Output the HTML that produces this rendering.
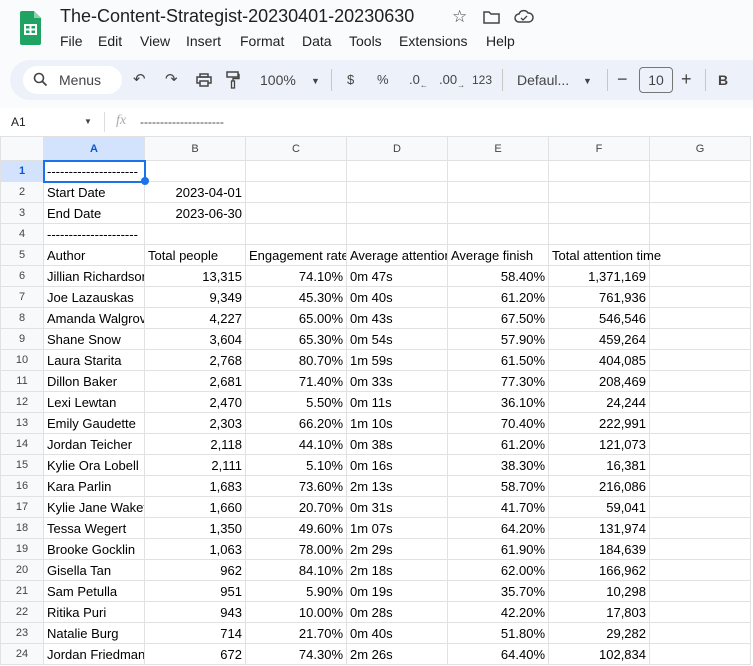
<!DOCTYPE html>
<html><head><meta charset="utf-8"><style>
body{margin:0;width:753px;height:666px;overflow:hidden;background:#f9fbfd;font-family:"Liberation Sans",Arial,sans-serif;position:relative;color:#1f1f1f}
.a{position:absolute;white-space:nowrap}
#title{left:60px;top:6px;font-size:18px;color:#1f1f1f}
#tb{left:10px;top:60px;width:760px;height:40px;background:#edf2fa;border-radius:20px}
#search{left:23px;top:66px;width:99px;height:28px;background:#fff;border-radius:14px}
.t{font-size:13px;color:#444;top:72px}
#fb{left:0;top:108px;width:753px;height:28px;background:#fff;border-bottom:1px solid #e1e1e1}
#bg{left:0;top:136px;width:753px;height:530px;background:#fff}
table{position:absolute;left:0;top:136px;width:750px;border-collapse:collapse;table-layout:fixed;background:#fff;font-size:13px}
td{border:1px solid #e1e1e1;height:21px;padding:0 3px;overflow:hidden;white-space:nowrap;color:#000;box-sizing:border-box}
tr:first-child td{height:24px;text-align:center;font-size:11px;color:#444;background:#f8f9fa}
td:first-child{text-align:center;font-size:11px;color:#444;background:#f8f9fa;padding:0}
.r{text-align:right}
</style></head><body>
<svg class="a" style="left:20px;top:11px" width="21" height="34" viewBox="0 0 21 34"><path d="M2 0h12l7 7v25a2 2 0 0 1-2 2H2a2 2 0 0 1-2-2V2a2 2 0 0 1 2-2z" fill="#1ea362"/><path d="M14 0v7h7z" fill="#8ed1a9"/><rect x="5" y="14" width="11" height="9" fill="none" stroke="#fff" stroke-width="2"/><path d="M5 18.5h11M10.5 14v9" stroke="#fff" stroke-width="2"/></svg>
<div class="a" id="title">The-Content-Strategist-20230401-20230630</div>
<div class="a" style="left:452px;top:7px;font-size:17px;color:#444">☆</div>
<svg class="a" style="left:483px;top:10px" width="17" height="14"><path d="M1 2h5l2 2h8v9H1z" fill="none" stroke="#444" stroke-width="1.5"/></svg>
<svg class="a" style="left:514px;top:9px" width="20" height="15"><path d="M5 13a4 4 0 0 1 0-8 5 5 0 0 1 9-1 4 4 0 0 1 1 9z" fill="none" stroke="#444" stroke-width="1.5"/><path d="M7 9l2 2 4-4" fill="none" stroke="#444" stroke-width="1.3"/></svg>
<div class="a" style="left:60px;top:33px;font-size:14px">File</div><div class="a" style="left:98px;top:33px;font-size:14px">Edit</div><div class="a" style="left:140px;top:33px;font-size:14px">View</div><div class="a" style="left:186px;top:33px;font-size:14px">Insert</div><div class="a" style="left:240px;top:33px;font-size:14px">Format</div><div class="a" style="left:302px;top:33px;font-size:14px">Data</div><div class="a" style="left:349px;top:33px;font-size:14px">Tools</div><div class="a" style="left:399px;top:33px;font-size:14px">Extensions</div><div class="a" style="left:486px;top:33px;font-size:14px">Help</div>
<div class="a" id="tb"></div>
<div class="a" id="search"></div>
<svg class="a" style="left:33px;top:72px" width="15" height="15"><circle cx="6" cy="6" r="4.5" fill="none" stroke="#444" stroke-width="1.6"/><path d="M9.5 9.5l4 4" stroke="#444" stroke-width="1.8"/></svg>
<div class="a t" style="left:59px;top:72px;font-size:14px">Menus</div>
<div class="a t" style="left:133px;font-size:15px;top:70px">↶</div><div class="a t" style="left:165px;font-size:15px;top:70px">↷</div>
<svg class="a" style="left:196px;top:73px" width="16" height="14"><rect x="4" y="1" width="8" height="3" fill="none" stroke="#444" stroke-width="1.5"/><rect x="1" y="4" width="14" height="6" fill="none" stroke="#444" stroke-width="1.5"/><rect x="4" y="8" width="8" height="5" fill="#edf2fa" stroke="#444" stroke-width="1.5"/></svg>
<svg class="a" style="left:226px;top:71px" width="14" height="18"><rect x="1" y="1" width="11" height="5" fill="none" stroke="#444" stroke-width="1.5"/><path d="M12 3.5h1v4H7v3" fill="none" stroke="#444" stroke-width="1.4"/><rect x="5.5" y="10" width="3" height="7" fill="none" stroke="#444" stroke-width="1.3"/></svg>
<div class="a t" style="left:260px;font-size:14px;top:72px">100%</div><div class="a t" style="left:311px;font-size:9px;top:76px">▼</div>
<div class="a" style="left:331px;top:69px;width:1px;height:22px;background:#c7c7c7"></div>
<div class="a t" style="left:347px">$</div><div class="a t" style="left:377px">%</div><div class="a t" style="left:409px">.0<sub style="font-size:8px">←</sub></div><div class="a t" style="left:439px">.00<sub style="font-size:8px">→</sub></div><div class="a t" style="left:472px;font-size:12px;top:73px">123</div>
<div class="a" style="left:502px;top:69px;width:1px;height:22px;background:#c7c7c7"></div>
<div class="a t" style="left:517px;font-size:14px">Defaul...</div><div class="a t" style="left:583px;font-size:9px;top:76px">▼</div>
<div class="a" style="left:607px;top:69px;width:1px;height:22px;background:#c7c7c7"></div>
<div class="a t" style="left:617px;font-size:18px;top:69px">−</div>
<div class="a" style="left:639px;top:67px;width:32px;height:24px;border:1px solid #747775;border-radius:4px;text-align:center;line-height:24px;font-size:14px;color:#444">10</div>
<div class="a t" style="left:681px;font-size:18px;top:69px">+</div>
<div class="a" style="left:705px;top:69px;width:1px;height:22px;background:#c7c7c7"></div>
<div class="a t" style="left:718px;font-size:14px;font-weight:bold;top:72px">B</div>
<div class="a" id="fb"></div>
<div class="a" id="bg"></div>
<div class="a" style="left:11px;top:115px;font-size:12px">A1</div>
<div class="a" style="left:84px;top:117px;font-size:8px;color:#444">▼</div>
<div class="a" style="left:104px;top:112px;width:1px;height:20px;background:#ddd"></div>
<div class="a" style="left:116px;top:113px;font-size:14px;color:#aaa;font-style:italic;font-family:'Liberation Serif',serif">fx</div>
<div class="a" style="left:140px;top:115px;font-size:12px;color:#444">---------------------</div>
<table>
<colgroup><col style="width:43px"><col style="width:101px"><col style="width:101px"><col style="width:101px"><col style="width:101px"><col style="width:101px"><col style="width:101px"><col style="width:101px"></colgroup>
<tr><td></td><td style="background:#d3e3fd;color:#0b57d0;font-weight:bold">A</td><td>B</td><td>C</td><td>D</td><td>E</td><td>F</td><td>G</td></tr>
<tr><td style="background:#d3e3fd;color:#0b57d0;font-weight:bold">1</td><td style="outline:2px solid #1a73e8;outline-offset:-1px">---------------------</td><td></td><td></td><td></td><td></td><td></td><td></td></tr>
<tr><td>2</td><td>Start Date</td><td class="r">2023-04-01</td><td></td><td></td><td></td><td></td><td></td></tr>
<tr><td>3</td><td>End Date</td><td class="r">2023-06-30</td><td></td><td></td><td></td><td></td><td></td></tr>
<tr><td>4</td><td>---------------------</td><td></td><td></td><td></td><td></td><td></td><td></td></tr>
<tr><td>5</td><td>Author</td><td>Total people</td><td>Engagement rate</td><td>Average attention</td><td>Average finish</td><td style="overflow:visible">Total attention time</td><td></td></tr>
<tr><td>6</td><td>Jillian Richardson</td><td class="r">13,315</td><td class="r">74.10%</td><td>0m 47s</td><td class="r">58.40%</td><td class="r">1,371,169</td><td></td></tr>
<tr><td>7</td><td>Joe Lazauskas</td><td class="r">9,349</td><td class="r">45.30%</td><td>0m 40s</td><td class="r">61.20%</td><td class="r">761,936</td><td></td></tr>
<tr><td>8</td><td>Amanda Walgrove</td><td class="r">4,227</td><td class="r">65.00%</td><td>0m 43s</td><td class="r">67.50%</td><td class="r">546,546</td><td></td></tr>
<tr><td>9</td><td>Shane Snow</td><td class="r">3,604</td><td class="r">65.30%</td><td>0m 54s</td><td class="r">57.90%</td><td class="r">459,264</td><td></td></tr>
<tr><td>10</td><td>Laura Starita</td><td class="r">2,768</td><td class="r">80.70%</td><td>1m 59s</td><td class="r">61.50%</td><td class="r">404,085</td><td></td></tr>
<tr><td>11</td><td>Dillon Baker</td><td class="r">2,681</td><td class="r">71.40%</td><td>0m 33s</td><td class="r">77.30%</td><td class="r">208,469</td><td></td></tr>
<tr><td>12</td><td>Lexi Lewtan</td><td class="r">2,470</td><td class="r">5.50%</td><td>0m 11s</td><td class="r">36.10%</td><td class="r">24,244</td><td></td></tr>
<tr><td>13</td><td>Emily Gaudette</td><td class="r">2,303</td><td class="r">66.20%</td><td>1m 10s</td><td class="r">70.40%</td><td class="r">222,991</td><td></td></tr>
<tr><td>14</td><td>Jordan Teicher</td><td class="r">2,118</td><td class="r">44.10%</td><td>0m 38s</td><td class="r">61.20%</td><td class="r">121,073</td><td></td></tr>
<tr><td>15</td><td>Kylie Ora Lobell</td><td class="r">2,111</td><td class="r">5.10%</td><td>0m 16s</td><td class="r">38.30%</td><td class="r">16,381</td><td></td></tr>
<tr><td>16</td><td>Kara Parlin</td><td class="r">1,683</td><td class="r">73.60%</td><td>2m 13s</td><td class="r">58.70%</td><td class="r">216,086</td><td></td></tr>
<tr><td>17</td><td>Kylie Jane Wakefield</td><td class="r">1,660</td><td class="r">20.70%</td><td>0m 31s</td><td class="r">41.70%</td><td class="r">59,041</td><td></td></tr>
<tr><td>18</td><td>Tessa Wegert</td><td class="r">1,350</td><td class="r">49.60%</td><td>1m 07s</td><td class="r">64.20%</td><td class="r">131,974</td><td></td></tr>
<tr><td>19</td><td>Brooke Gocklin</td><td class="r">1,063</td><td class="r">78.00%</td><td>2m 29s</td><td class="r">61.90%</td><td class="r">184,639</td><td></td></tr>
<tr><td>20</td><td>Gisella Tan</td><td class="r">962</td><td class="r">84.10%</td><td>2m 18s</td><td class="r">62.00%</td><td class="r">166,962</td><td></td></tr>
<tr><td>21</td><td>Sam Petulla</td><td class="r">951</td><td class="r">5.90%</td><td>0m 19s</td><td class="r">35.70%</td><td class="r">10,298</td><td></td></tr>
<tr><td>22</td><td>Ritika Puri</td><td class="r">943</td><td class="r">10.00%</td><td>0m 28s</td><td class="r">42.20%</td><td class="r">17,803</td><td></td></tr>
<tr><td>23</td><td>Natalie Burg</td><td class="r">714</td><td class="r">21.70%</td><td>0m 40s</td><td class="r">51.80%</td><td class="r">29,282</td><td></td></tr>
<tr><td>24</td><td>Jordan Friedman</td><td class="r">672</td><td class="r">74.30%</td><td>2m 26s</td><td class="r">64.40%</td><td class="r">102,834</td><td></td></tr>
</table>
<div class="a" style="left:141px;top:177px;width:8px;height:8px;border-radius:50%;background:#1a73e8"></div>
</body></html>
